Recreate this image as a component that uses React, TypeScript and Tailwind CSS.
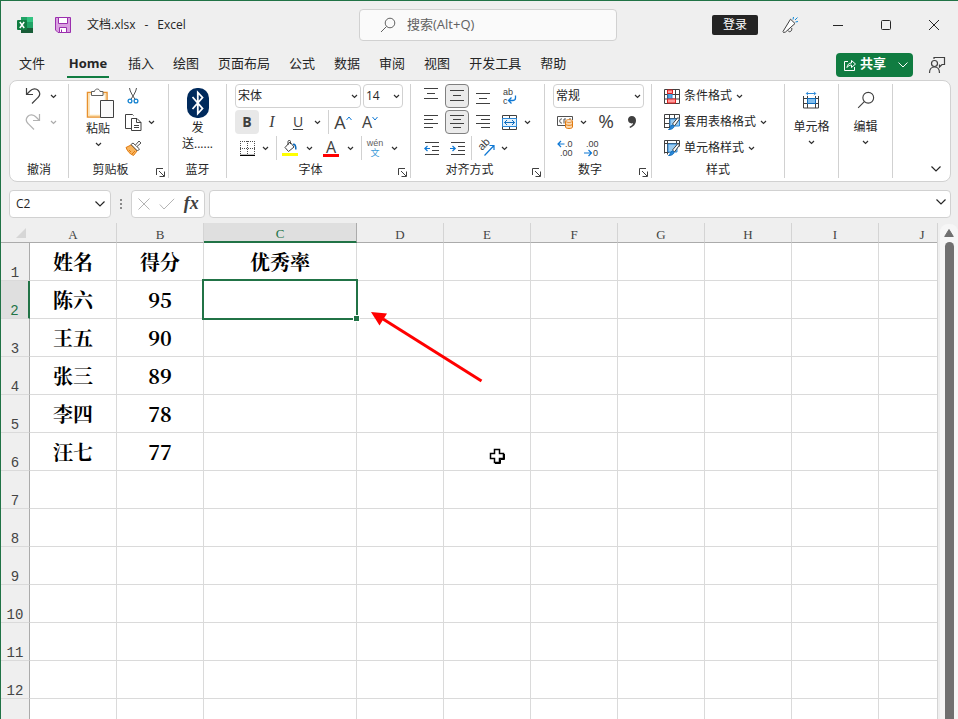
import { useState, type ReactNode } from "react";
import clsx from "clsx";

const TABS = ["文件", "Home", "插入", "绘图", "页面布局", "公式", "数据", "审阅", "视图", "开发工具", "帮助"];

const COLUMNS = ["A", "B", "C", "D", "E", "F", "G", "H", "I", "J"];

const ROWS: string[][] = [
  ["姓名", "得分", "优秀率"],
  ["陈六", "95"],
  ["王五", "90"],
  ["张三", "89"],
  ["李四", "78"],
  ["汪七", "77"],
  [],
  [],
  [],
  [],
  [],
  [],
  [],
];

export default function App() {
  const [tab, setTab] = useState("Home");

  return (
    <div className="flex h-screen flex-col overflow-hidden border-t border-l border-[#217346] bg-[#efefef] font-['Open_Sans','Noto_Sans_CJK_SC',sans-serif] text-xs text-[#262626]">
      <TitleBar />
      <nav className="flex h-[31px] shrink-0 items-center pl-[18px] text-[13px]">
        <div className="flex gap-[19px]">
          {TABS.map((name) => (
            <button
              key={name}
              onClick={() => setTab(name)}
              className={clsx(
                "h-[26px] border-b-2 pt-px whitespace-nowrap",
                tab === name ? "border-[#107c41] font-bold" : "border-transparent",
                name === "文件" && "mr-[3px]",
                name === "Home" && "w-[42px]"
              )}
            >
              {name}
            </button>
          ))}
        </div>
        <button className="mr-[15px] ml-auto flex h-6 w-[77px] items-center rounded bg-[#107c41] pl-2 font-bold text-white">
          <ShareIcon />
          <span className="ml-1 pb-[2px]">共享</span>
          <svg className="ml-auto mr-1" width="12" height="8" fill="none" stroke="currentColor">
            <path d="M1.5 1.5 6 6l4.5-4.5" />
          </svg>
        </button>
        <button aria-label="批注" className="mr-3">
          <CommentPersonIcon />
        </button>
      </nav>
      <Ribbon />
      <FormulaBar />
      <Sheet />
    </div>
  );
}

function TitleBar() {
  return (
    <header className="flex h-12 shrink-0 items-center">
      <div className="flex w-[358px] shrink-0 items-center pl-4">
        <ExcelLogo />
        <button aria-label="保存" className="ml-[22px]">
          <SaveIcon />
        </button>
        <div className="ml-4 flex gap-[9px]">
          <span>文档.xlsx</span>
          <span>-</span>
          <span>Excel</span>
        </div>
      </div>
      <label className="flex h-8 max-w-[258px] flex-1 items-center rounded border border-[#d1d1d1] bg-[#fafafa] pl-5">
        <SearchIcon size={16} color="#616161" />
        <input
          aria-label="搜索"
          placeholder="搜索(Alt+Q)"
          className="ml-[11px] w-full min-w-0 bg-transparent text-[13px] outline-none placeholder:text-[#616161]"
        />
      </label>
      <div className="ml-auto flex items-center">
        <button className="mr-2 h-5 w-[46px] rounded-xs bg-[#242424] text-white">登录</button>
        <TitleButton label="即将推出">
          <MegaphoneIcon />
        </TitleButton>
        <TitleButton label="最小化">
          <svg width="12" height="12" stroke="#262626">
            <path d="M1 6.5h10" />
          </svg>
        </TitleButton>
        <TitleButton label="最大化">
          <svg width="12" height="12" fill="none" stroke="#262626">
            <rect x="1.5" y="1.5" width="9" height="9" rx="1" />
          </svg>
        </TitleButton>
        <TitleButton label="关闭">
          <svg width="12" height="12" fill="none" stroke="#262626">
            <path d="m1 1 10 10M11 1 1 11" />
          </svg>
        </TitleButton>
      </div>
    </header>
  );
}

function TitleButton({ label, children }: { label: string; children: ReactNode }) {
  return (
    <button aria-label={label} className="flex h-8 w-12 items-center justify-center">
      {children}
    </button>
  );
}

/* ---------- ribbon ---------- */

function Ribbon() {
  return (
    <div className="mr-[7px] ml-2 flex shrink-0 overflow-hidden rounded-lg border border-[#d1d1d1] bg-white">
      <Group label="撤消" className="w-[59px]">
        <Row className="gap-[5px] pl-[14px]">
          <button aria-label="撤消">
            <UndoIcon />
          </button>
          <Drop label="撤消选项" />
        </Row>
        <Row className="gap-[5px] pl-[14px] opacity-40">
          <button aria-label="恢复" className="-scale-x-100">
            <UndoIcon />
          </button>
          <Drop label="恢复选项" />
        </Row>
        <Row />
      </Group>

      <Group label="剪贴板" className="w-[100px]" launcher>
        <div className="flex h-[76px] pl-[10px]">
          <button className="flex w-[38px] flex-col items-center pt-1">
            <PasteIcon />
            <span className="mt-px leading-[18px]">粘贴</span>
            <Caret className="mt-1" />
          </button>
          <div className="ml-1 flex flex-col gap-[2px]">
            <Row>
              <Tool label="剪切">
                <CutIcon />
              </Tool>
            </Row>
            <Row>
              <Tool label="复制">
                <CopyIcon />
              </Tool>
              <Drop label="复制选项" />
            </Row>
            <Row>
              <Tool label="格式刷">
                <BrushIcon />
              </Tool>
            </Row>
          </div>
        </div>
      </Group>

      <Group label="蓝牙" className="w-[58px]">
        <button className="flex h-[76px] flex-col items-center pt-1 leading-4">
          <BluetoothIcon />
          <span className="mt-[2px]">发</span>
          <span>送......</span>
        </button>
      </Group>

      <Group label="字体" className="w-[184px]" launcher>
        <Row className="gap-[2px] pl-2">
          <Select label="字体名称" className="w-[126px]" options={["宋体", "微软雅黑", "黑体"]} />
          <Select label="字号" className="w-10" options={["14", "12", "16"]} />
        </Row>
        <Row className="pl-2">
          <Tool label="加粗" className="w-6 rounded bg-[#e8e8e8] text-sm font-bold">
            B
          </Tool>
          <Tool label="倾斜" className="w-[26px] font-['Liberation_Serif',serif] text-base italic">
            I
          </Tool>
          <Tool label="下划线" className="w-[26px] text-sm underline underline-offset-2">
            U
          </Tool>
          <Drop label="下划线样式" />
          <Divider />
          <Tool label="增大字号" className="w-7 text-lg">
            A
            <svg className="mb-2" width="6" height="5" fill="none" stroke="#0f78d4">
              <path d="m.5 4 2.500-3L5.500 4" />
            </svg>
          </Tool>
          <Tool label="减小字号" className="w-[26px] text-base">
            A
            <svg className="mb-2" width="6" height="5" fill="none" stroke="#0f78d4">
              <path d="m.5 1 2.500 3L5.500 1" />
            </svg>
          </Tool>
        </Row>
        <Row className="pl-2">
          <Tool label="边框">
            <BorderIcon />
          </Tool>
          <Drop label="边框样式" />
          <Divider />
          <Tool label="填充颜色" className="w-[26px]">
            <FillIcon />
          </Tool>
          <Drop label="填充颜色选项" />
          <Tool label="字体颜色" className="ml-[3px] w-[26px] flex-col text-base leading-[14px]">
            A
            <span className="h-[3px] w-4 bg-[#f00]" />
          </Tool>
          <Drop label="字体颜色选项" />
          <Divider />
          <Tool
            label="拼音"
            className="w-[26px] flex-col font-['Liberation_Sans','Noto_Sans_CJK_SC',sans-serif] text-[9px] leading-[10px] text-[#616161]"
          >
            <span>wén</span>
            <span className="text-[#3a9bd9]">文</span>
          </Tool>
          <Drop label="拼音选项" />
        </Row>
      </Group>

      <Group label="对齐方式" className="w-[134px]" launcher>
        <Row className="pl-2">
          <div className="flex gap-[2px]">
            <Tool label="顶端对齐">
              <Lines rows={[[0, 14, 1], [3, 11, 6], [0, 14, 11]]} />
            </Tool>
            <Tool label="垂直居中" pressed>
              <Lines rows={[[0, 14, 3], [3, 11, 8], [0, 14, 13]]} />
            </Tool>
            <Tool label="底端对齐">
              <Lines rows={[[0, 14, 6], [3, 11, 11], [0, 14, 16]]} />
            </Tool>
            <Tool label="自动换行">
              <WrapIcon />
            </Tool>
          </div>
        </Row>
        <Row className="pl-2">
          <div className="flex gap-[2px]">
            <Tool label="左对齐">
              <Lines rows={[[0, 14, 2], [0, 9, 6], [0, 14, 10], [0, 9, 14]]} />
            </Tool>
            <Tool label="居中" pressed>
              <Lines rows={[[0, 14, 2], [3, 11, 6], [0, 14, 10], [3, 11, 14]]} />
            </Tool>
            <Tool label="右对齐">
              <Lines rows={[[0, 14, 2], [5, 14, 6], [0, 14, 10], [5, 14, 14]]} />
            </Tool>
            <Tool label="合并后居中">
              <MergeIcon />
            </Tool>
          </div>
          <Drop label="合并选项" />
        </Row>
        <Row className="pl-2">
          <div className="flex gap-[2px]">
            <Tool label="减少缩进量">
              <IndentIcon arrow="M6 7.500H.8M3.500 5 .8 7.500 3.500 10" />
            </Tool>
            <Tool label="增加缩进量">
              <IndentIcon arrow="M0 7.500h5.200M2.500 5l2.700 2.500L2.500 10" />
            </Tool>
            <span className="w-px bg-[#d1d1d1]" />
            <Tool label="方向">
              <OrientationIcon />
            </Tool>
          </div>
          <Drop label="方向选项" />
        </Row>
      </Group>

      <Group label="数字" className="w-[107px]" launcher>
        <Row className="pl-2">
          <Select label="数字格式" className="w-[91px]" options={["常规", "数值", "百分比"]} />
        </Row>
        <Row className="pl-2">
          <Tool label="会计数字格式">
            <CurrencyIcon />
          </Tool>
          <Drop label="会计格式选项" />
          <Tool label="百分比样式" className="ml-1 w-[26px] text-[19px]">
            %
          </Tool>
          <Tool label="千位分隔样式" className="w-[26px]">
            <svg width="10" height="14" fill="#404040">
              <path d="M4.800 1C7.300 1 9 2.700 9 5.300c0 3.800-2.600 6.700-6 7.700l-.5-1.200c2-.8 3.300-2 3.600-3.700-.4.2-.9.300-1.500.3C2.600 8.400 1 7 1 4.800 1 2.500 2.700 1 4.800 1z" />
            </svg>
          </Tool>
        </Row>
        <Row className="gap-[2px] pl-2">
          <Tool label="增加小数位数">
            <DecimalIcon more />
          </Tool>
          <Tool label="减少小数位数">
            <DecimalIcon />
          </Tool>
        </Row>
      </Group>

      <Group label="样式" className="w-[133px]">
        <StyleButton icon={<ConditionalIcon />} text="条件格式" />
        <StyleButton icon={<TableStyleIcon />} text="套用表格格式" />
        <StyleButton icon={<TableStyleIcon cell />} text="单元格样式" />
      </Group>

      <Group className="w-[54px]">
        <BigButton icon={<CellsIcon />} text="单元格" />
      </Group>
      <Group className="w-[54px]">
        <BigButton icon={<SearchIcon size={18} color="#404040" />} text="编辑" />
      </Group>
      <button aria-label="折叠功能区" className="mt-auto mr-2 mb-2 ml-auto">
        <ChevronDown />
      </button>
    </div>
  );
}

type GroupProps = {
  label?: string;
  className?: string;
  launcher?: boolean;
  children: ReactNode;
};

function Group({ label, className, launcher, children }: GroupProps) {
  return (
    <section className={clsx("my-[3px] flex shrink-0 flex-col border-r border-[#d1d1d1]", className)}>
      <div className="flex h-[76px] flex-col gap-[2px]">{children}</div>
      <div className="flex h-[18px]">
        <span className="flex-1 text-center leading-5">{label}</span>
        {launcher && (
          <button aria-label={label + "设置"} className="flex w-4 items-end justify-center pb-px">
            <svg width="10" height="10" fill="none" stroke="#404040">
              <path d="M1.500 8V1.500H8M4 4l5 5M9.500 4.500v5h-5" />
            </svg>
          </button>
        )}
      </div>
    </section>
  );
}

function Row({ className, children }: { className?: string; children?: ReactNode }) {
  return <div className={clsx("flex h-6 items-center", className)}>{children}</div>;
}

type ToolProps = {
  label: string;
  pressed?: boolean;
  className?: string;
  children: ReactNode;
};

function Tool({ label, pressed, className = "w-6", children }: ToolProps) {
  return (
    <button
      aria-label={label}
      aria-pressed={pressed}
      className={clsx(
        "flex h-6 shrink-0 items-center justify-center text-[#404040]",
        pressed && "rounded border border-[#808080] bg-[#ebebeb]",
        className
      )}
    >
      {children}
    </button>
  );
}

function Drop({ label }: { label: string }) {
  return (
    <button aria-label={label} className="flex h-6 w-3 shrink-0 items-center justify-center">
      <Caret />
    </button>
  );
}

function Caret({ className }: { className?: string }) {
  return (
    <svg className={clsx("shrink-0", className)} width="7" height="5" fill="none" stroke="#303030" strokeWidth="1.200">
      <path d="M1 1l2.500 2.500L6 1" />
    </svg>
  );
}

function ChevronDown() {
  return (
    <svg width="12" height="8" fill="none" stroke="#262626" strokeWidth="1.200">
      <path d="M1.500 1.500 6 6l4.500-4.500" />
    </svg>
  );
}

function Divider() {
  return <span className="ml-[5px] h-6 w-px shrink-0 bg-[#d1d1d1]" />;
}

function Select({ label, className, options }: { label: string; className: string; options: string[] }) {
  return (
    <div className={clsx("relative", className)}>
      <select
        aria-label={label}
        className="h-6 w-full appearance-none rounded border border-[#d1d1d1] bg-white pl-[2px] text-xs outline-none"
      >
        {options.map((o) => (
          <option key={o}>{o}</option>
        ))}
      </select>
      <Caret className="pointer-events-none absolute top-[10px] right-[3px]" />
    </div>
  );
}

function StyleButton({ icon, text }: { icon: ReactNode; text: string }) {
  return (
    <button className="flex h-6 items-center gap-1 pl-3 whitespace-nowrap">
      {icon}
      <span>{text}</span>
      <Caret />
    </button>
  );
}

function BigButton({ icon, text }: { icon: ReactNode; text: string }) {
  return (
    <button className="flex h-[76px] flex-col items-center pt-[7px]">
      {icon}
      <span className="mt-[9px] leading-[18px]">{text}</span>
      <Caret className="mt-1" />
    </button>
  );
}

/* ---------- formula bar ---------- */

function FormulaBar() {
  return (
    <div className="mt-2 mr-[7px] ml-2 flex h-7 shrink-0">
      <div className="flex w-[102px] items-center rounded border border-[#d1d1d1] bg-white pr-1">
        <input aria-label="名称框" defaultValue="C2" className="w-full min-w-0 pl-[6px] outline-none" />
        <button aria-label="名称列表">
          <ChevronDown />
        </button>
      </div>
      <svg className="mx-2 self-center" width="4" height="12" fill="#8a8a8a">
        <path d="M1 1h2v2H1zM1 5h2v2H1zM1 9h2v2H1z" />
      </svg>
      <div className="flex w-[74px] items-center justify-around rounded border border-[#d1d1d1] bg-white px-px">
        <button aria-label="取消">
          <svg width="14" height="14" fill="none" stroke="#b4b4b4">
            <path d="m1.500 1.500 11 11m0-11-11 11" />
          </svg>
        </button>
        <button aria-label="输入">
          <svg width="16" height="14" fill="none" stroke="#b4b4b4">
            <path d="M.8 7.500 5 12 15.200 1.800" />
          </svg>
        </button>
        <button
          aria-label="插入函数"
          className="pb-[2px] font-['Liberation_Serif',serif] text-lg leading-none font-bold text-[#404040] italic"
        >
          fx
        </button>
      </div>
      <div className="ml-1 flex flex-1 rounded border border-[#d1d1d1] bg-white">
        <input aria-label="编辑栏" className="w-full min-w-0 px-2 outline-none" />
        <button aria-label="展开编辑栏" className="mr-[3px] mb-1">
          <ChevronDown />
        </button>
      </div>
    </div>
  );
}

/* ---------- sheet ---------- */

function Sheet() {
  return (
    <main className="mt-[5px] flex min-h-0 flex-1">
      <div className="relative min-w-0 flex-1 overflow-hidden border-r border-[#d4d4d4]">
        <table className="w-max table-fixed border-separate border-spacing-0 bg-white">
          <colgroup>
            <col className="w-[29px]" />
            {COLUMNS.map((c) => (
              <col key={c} className={c === "C" ? "w-[153px]" : "w-[87px]"} />
            ))}
          </colgroup>
          <thead className="font-['Liberation_Serif',serif] text-[13px] leading-[14px] text-[#444]">
            <tr className="h-5">
              <th className="border-b border-[#ababab] bg-[#efefef] p-0">
                <svg className="ml-auto mr-1" width="10" height="10" fill="#d6d6d6">
                  <path d="M10 0v10H0z" />
                </svg>
              </th>
              {COLUMNS.map((c) => (
                <th
                  key={c}
                  scope="col"
                  className={clsx(
                    "border-r p-0 pt-1 font-normal",
                    c === "C"
                      ? "border-r-[#ababab] border-b-2 border-b-[#217346] bg-[#dfdfdf] text-[#217346]"
                      : "border-b border-r-[#d4d4d4] border-b-[#ababab] bg-[#efefef]"
                  )}
                >
                  {c}
                </th>
              ))}
            </tr>
          </thead>
          <tbody>
            {ROWS.map((cells, r) => (
              <tr key={r} className="h-[38px]">
                <th
                  scope="row"
                  className={clsx(
                    "border-b border-b-[#dadada] p-0 align-bottom font-['Liberation_Mono',monospace] text-sm leading-[14px] font-normal",
                    r === 1
                      ? "border-r-2 border-r-[#217346] bg-[#dfdfdf] text-[#217346]"
                      : "border-r border-r-[#ababab] bg-[#efefef] text-[#444]"
                  )}
                >
                  {r + 1}
                </th>
                {COLUMNS.map((c, i) => (
                  <td
                    key={c}
                    className="relative border-r border-b border-[#dadada] p-0 text-center font-['Noto_Serif_CJK_SC','Noto_Sans_CJK_SC',serif] text-xl leading-6 font-bold text-black"
                  >
                    {cells[i]}
                    {r === 1 && c === "C" && <Selection />}
                  </td>
                ))}
              </tr>
            ))}
          </tbody>
        </table>
        <svg className="pointer-events-none absolute top-[87px] left-[368px]" width="116" height="74">
          <path d="M112.500 71 14 9" stroke="#f00" strokeWidth="3" />
          <path d="m2 2 16 1.500-7.500 12z" fill="#f00" />
        </svg>
        <svg
          className="pointer-events-none absolute top-[225px] left-[488px]"
          width="17"
          height="17"
          fill="#fff"
          stroke="#000"
          strokeWidth="1.500"
        >
          <path d="M5.500 1.500h5v4h4v5h-4v4h-5v-4h-4v-5h4z" />
          <path d="M6 15.500h5.500v-4h4V6" fill="none" strokeWidth="1" />
        </svg>
      </div>
      <div className="mt-px ml-[2px] flex w-[18px] flex-col items-center rounded-t-lg bg-[#f6f6f6]">
        <button aria-label="向上滚动" className="flex h-[18px] items-center">
          <svg width="10" height="8" fill="#707070">
            <path d="M5 .5 9.300 7.500H.7z" stroke="#707070" strokeLinejoin="round" />
          </svg>
        </button>
        <div className="w-[9px] flex-1 rounded-t-full bg-[#707070]" />
      </div>
    </main>
  );
}

function Selection() {
  return (
    <div className="absolute -inset-[2px] z-10 border-2 border-[#217346]">
      <span className="absolute -right-1 -bottom-1 size-[7px] border border-white bg-[#217346]" />
    </div>
  );
}

/* ---------- icons ---------- */

function ExcelLogo() {
  return (
    <svg width="16" height="16">
      <path d="M4 0h6v5H4z" fill="#21a366" />
      <path d="M10 0h6v5h-6z" fill="#33c481" />
      <path d="M4 5h6v6H4z" fill="#107c41" />
      <path d="M10 5h6v6h-6z" fill="#21a366" />
      <path d="M4 11h12v5H4z" fill="#185c37" />
      <rect y="3" width="10" height="10" rx="1" fill="#107c41" />
      <path d="m2.800 5 4.400 6M7.200 5l-4.400 6" stroke="#fff" strokeWidth="1.500" />
    </svg>
  );
}

function SaveIcon() {
  return (
    <svg width="16" height="16" fill="none" stroke="#9b2fae">
      <path d="M.5.5h15v15H3L.5 13z" fill="#d9a0e0" />
      <path d="M3.500.5h9v6h-9z" fill="#fff" />
      <path d="M4.500 15.500v-5h7v5z" fill="#fff" />
      <path d="M6.500 12.500v3" />
    </svg>
  );
}

function SearchIcon({ size, color }: { size: number; color: string }) {
  return (
    <svg className="shrink-0" width={size} height={size} viewBox="0 0 16 16" fill="none" stroke={color}>
      <circle cx="10" cy="6" r="4.800" />
      <path d="M6.500 9.500 1 15" />
    </svg>
  );
}

function MegaphoneIcon() {
  return (
    <svg width="18" height="18" fill="none" stroke="#404040">
      <path d="m2 15.500 7.500-12.300 4.500 4.300L4.500 16l-2 .5z" fill="#fff" />
      <path d="M7 14.500c1 2.300 4.200 1.300 3.800-2.500" />
      <path d="M12 3.500 12.500 1M14 4l2.500-2.500M14.500 6l2.500-.5" stroke="#0f88d8" />
    </svg>
  );
}

function ShareIcon() {
  return (
    <svg width="12" height="12" fill="none" stroke="#fff">
      <path d="M4 2.500H.5v9h10V8" />
      <path d="M3 8.500c.3-3 2-4.500 4.500-4.500V1.500l4 3.500-4 3.500V6C5.500 6 4 7 3 8.500z" />
    </svg>
  );
}

function CommentPersonIcon() {
  return (
    <svg width="18" height="18" fill="none" stroke="#404040" strokeWidth="1.200">
      <circle cx="6.500" cy="7.500" r="3" />
      <path d="M1.500 17c0-4 2-6 5-6s5 2 5 6" />
      <path d="M6 3V1.500h10.500v7H14l-2.500 2.500V8.500" />
    </svg>
  );
}

function UndoIcon() {
  return (
    <svg width="18" height="18" fill="none" stroke="#404040" strokeWidth="1.200">
      <path d="M2.500 1v6.500H9" />
      <path d="M2.500 7.500 6 4c2.500-2.800 6.300-2.800 8.300-.5 2 2.300 1.800 5-.5 7.200L8 16.500" />
    </svg>
  );
}

function PasteIcon() {
  return (
    <svg className="ml-1 shrink-0" width="28" height="31" fill="none">
      <path d="M1.500 4.500h19.500v24.500H1.500z" fill="#fff" stroke="#e8912d" strokeWidth="1.500" />
      <path d="M3 6h16.500v21.500H3z" stroke="#fbdfae" strokeWidth="1.500" />
      <path d="M5.500 7.500v-4H8.500C9 .2 13.500 .2 14 3.500h3v4z" fill="#fff" stroke="#616161" />
      <path d="M14.500 12.500h13v17h-13z" fill="#fafafa" stroke="#404040" />
    </svg>
  );
}

function CutIcon() {
  return (
    <svg width="12" height="16" fill="none" stroke="#505050">
      <path d="M2.500 0C3 4 6 8 8.500 12M9.500 0C9 4 6 8 3.500 12" />
      <circle cx="3" cy="13" r="1.900" stroke="#1482d0" strokeWidth="1.300" />
      <circle cx="9" cy="13" r="1.900" stroke="#1482d0" strokeWidth="1.300" />
    </svg>
  );
}

function CopyIcon() {
  return (
    <svg width="17" height="17" fill="none" stroke="#404040">
      <path d="M6.500 14.500h-6v-14h7l1 1" />
      <path d="M6.500 4.500h5.500l4 4v8H6.500z" fill="#fff" />
      <path d="M11.500 4.500v4H16M9 11.500h5M9 13.500h5" />
    </svg>
  );
}

function BrushIcon() {
  return (
    <svg width="17" height="16" fill="none">
      <path d="m1 7.500 5-2.500 6 6-3.500 4.500C5 14 2.500 11.500 1 7.500z" fill="#f9b45c" stroke="#e07a10" />
      <path d="m4 10 2 2M7 14l3-3" stroke="#e07a10" />
      <path d="m6 4.500 2-1.500 6.500 6-2 2z" fill="#fff" stroke="#505050" />
      <path d="m10.500 5 3.500-4 2 2-4 3.500" fill="#fff" stroke="#505050" />
    </svg>
  );
}

function BluetoothIcon() {
  return (
    <svg width="22" height="30" fill="none">
      <rect width="22" height="30" rx="10" fill="#002a5c" />
      <path d="m5.500 9 10 11.500-4.700 5V4.500l4.700 5-10 11.500" stroke="#fff" strokeWidth="1.800" />
    </svg>
  );
}

function BorderIcon() {
  return (
    <svg width="15" height="15" fill="none" stroke="#505050">
      <path d="M0 .5h15M0 7.500h15M.5 0v14M7.500 0v14M14.500 0v14" strokeDasharray="1 1" />
      <path d="M0 14.500h15" stroke="#000" strokeWidth="1.500" />
    </svg>
  );
}

function FillIcon() {
  return (
    <svg width="16" height="16" fill="none" stroke="#404040">
      <path d="M3 7.500 8 2l4 5-5.500 4.500z" />
      <path d="M6 5V1.500c0-1.500 2.500-1.500 2.500 0V4" />
      <path d="M11 4.500c2-.5 3 1 2.800 5" stroke="#0f6cbd" strokeWidth="1.600" />
      <path d="M0 13h16v3H0z" fill="#ff0" stroke="none" />
    </svg>
  );
}

function Lines({ rows }: { rows: number[][] }) {
  return (
    <svg className="shrink-0" width="14" height="16" stroke="#404040">
      {rows.map(([from, to, y]) => (
        <path key={y} d={`M${from} ${y - 0.5}H${to}`} />
      ))}
    </svg>
  );
}

function WrapIcon() {
  return (
    <svg className="overflow-visible font-['Liberation_Sans',sans-serif]" width="16" height="18" fill="#404040">
      <text x="2" y="8" fontSize="9">
        ab
      </text>
      <text x="2" y="17" fontSize="9">
        c
      </text>
      <path d="M14.500 8.500V11c0 2-1.500 2.500-3 2.500H8M10.500 10.500l-3 3 3 3" fill="none" stroke="#0f78d4" strokeWidth="1.300" />
    </svg>
  );
}

function MergeIcon() {
  return (
    <svg width="15" height="15" fill="none" stroke="#404040">
      <path d="M.5.5h14v14H.5zM7.500.5v3M7.500 11.500v3" />
      <path d="M.5 3.500h14v8H.5z" fill="#e3f1fb" stroke="#2b88d8" />
      <path d="M2.500 7.500h10M5 5 2.500 7.500 5 10M10 5l2.500 2.500L10 10" stroke="#0f6cbd" />
    </svg>
  );
}

function IndentIcon({ arrow }: { arrow: string }) {
  return (
    <svg width="15" height="15" fill="none" stroke="#404040">
      <path d="M1 1.500h14M8 5.500h7M8 9.500h7M1 13.500h14" />
      <path d={arrow} stroke="#0f78d4" strokeWidth="1.200" />
    </svg>
  );
}

function OrientationIcon() {
  return (
    <svg className="overflow-visible font-['Liberation_Sans',sans-serif]" width="17" height="17" fill="none">
      <text fontSize="11" fill="#404040" transform="translate(4 11) rotate(-45)">
        ab
      </text>
      <path d="M6.500 15.500 16 5.500M11.500 5.500H16V10" stroke="#0f78d4" strokeWidth="1.200" />
    </svg>
  );
}

function CurrencyIcon() {
  return (
    <svg width="17" height="14" fill="none" stroke="#505050">
      <path d="M8 10.500H.5v-9h15V5" />
      <path d="M5 4C2 3 2 9 5 8M7 8.500V4h2M12 4h2" />
      <path d="M8.500 6v6c0 2 7 2 7 0V6" fill="#fbd9b0" stroke="#e07a10" />
      <ellipse cx="12" cy="6" rx="3.500" ry="1.300" fill="#fff" stroke="#e07a10" />
      <path d="M8.500 9c0 1.800 7 1.800 7 0" stroke="#e07a10" />
    </svg>
  );
}

function DecimalIcon({ more }: { more?: boolean }) {
  return (
    <svg
      className="overflow-visible font-['Liberation_Sans',sans-serif]"
      width="17"
      height="18"
      fill="#404040"
      fontSize="9"
    >
      <text x={more ? 8 : 3} y="8">
        {more ? ".0" : ".00"}
      </text>
      <text x={more ? 3 : 10} y="17">
        {more ? ".00" : "0"}
      </text>
      <path
        d={more ? "M7.500 5H1M4 2 1 5l3 3" : "M1 14h7.500M5.500 11l3 3-3 3"}
        fill="none"
        stroke="#0f78d4"
        strokeWidth="1.200"
      />
    </svg>
  );
}

function ConditionalIcon() {
  return (
    <svg width="16" height="15" fill="none" stroke="#404040">
      <path d="M.5.500h15v14H.5zM3.500 0v15M11.500 0v15M0 5.500h16M0 10h16" />
      <path d="M4 5h4v5H4z" fill="#5aa9e0" stroke="#2b88d8" />
      <path d="M3.500 1h5v3.500h-5zM3.500 10h8v4h-8z" fill="#ff9b9b" stroke="#e02020" />
    </svg>
  );
}

function TableStyleIcon({ cell }: { cell?: boolean }) {
  return (
    <svg width="16" height="16" fill="none" stroke="#404040">
      <path
        d={
          cell
            ? "M.5 13.500V.5h15v6M.5 3.500h15M3.500.5v14M.5 12.500h5M12.500.5v3"
            : "M.5 14V.5h15V6M.5 4.500h15M.5 9.500H6M5.500.5V14M10.500.5v4M.5 13.500h5"
        }
      />
      <path d={cell ? "M4 4h9v8H4z" : "M6 5h9.500v7H6z"} fill="#9ccdf2" stroke="#2b88d8" />
      <path d="M8.500 10 14 3.500 15.500 5 10.500 12z" fill="#fff" />
      <path d="M4.500 15.500c2-.3 1.500-4 4-4.500 2.300 0 2.300 4.500-4 4.500z" fill="#2b88d8" stroke="#0f6cbd" />
    </svg>
  );
}

function CellsIcon() {
  return (
    <svg width="17" height="18" fill="none" stroke="#404040">
      <path d="M.5 5v12h15V5M4.500 5v12M12.500 5v12M.5 7.500h15M.5 12.500h15" />
      <path d="M4.500 7.500h8v5h-8z" fill="#83beec" stroke="#0f6cbd" />
      <path d="M3.500 2.500h9M5 .8 3.300 2.500 5 4.200M11 .8l1.700 1.700L11 4.200" stroke="#2b88d8" />
    </svg>
  );
}
